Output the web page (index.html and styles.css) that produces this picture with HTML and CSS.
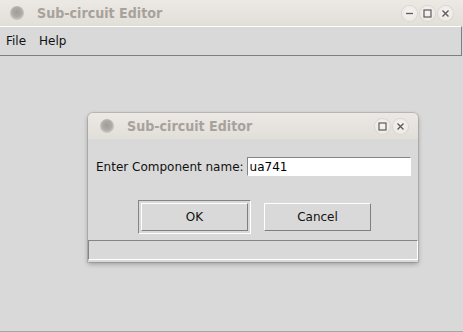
FILE: index.html
```html
<!DOCTYPE html>
<html lang="en">
<head>
    <meta charset="UTF-8">
    <title>Sub-circuit Editor</title>
    <link rel="stylesheet" href="styles.css">
</head>
<body>
    <div class="window">
        <div class="titlebar">
            <span class="orb"></span>
            <span class="title">Sub-circuit Editor</span>
            <div class="controls">
                <span class="ctl"><svg width="15" height="15" viewBox="0 0 15 15"><path d="M4 7.5h7" stroke="#5c5c5c" stroke-width="1.3"/></svg></span>
                <span class="ctl"><svg width="15" height="15" viewBox="0 0 15 15"><rect x="4" y="4" width="7" height="7" fill="none" stroke="#5c5c5c" stroke-width="1.2"/></svg></span>
                <span class="ctl"><svg width="15" height="15" viewBox="0 0 15 15"><path d="M4.5 4.5l6 6M10.5 4.5l-6 6" stroke="#5c5c5c" stroke-width="1.4"/></svg></span>
            </div>
        </div>
        <div class="menubar">
            <span class="menu-item">File</span>
            <span class="menu-item">Help</span>
        </div>
        <div class="workspace"></div>
    </div>

    <div class="dialog">
        <div class="titlebar">
            <span class="orb"></span>
            <span class="title">Sub-circuit Editor</span>
            <div class="controls">
                <span class="ctl"><svg width="15" height="15" viewBox="0 0 15 15"><rect x="4" y="4" width="7" height="7" fill="none" stroke="#5c5c5c" stroke-width="1.2"/></svg></span>
                <span class="ctl"><svg width="15" height="15" viewBox="0 0 15 15"><path d="M4.5 4.5l6 6M10.5 4.5l-6 6" stroke="#5c5c5c" stroke-width="1.4"/></svg></span>
            </div>
        </div>
        <div class="dialog-body">
            <div class="field-row">
                <label for="comp">Enter Component name:</label>
                <input type="text" id="comp" value="ua741">
            </div>
            <div class="button-row">
                <div class="default-ring"><button class="tk-btn">OK</button></div>
                <button class="tk-btn">Cancel</button>
            </div>
        </div>
        <div class="statusbar"></div>
    </div>
</body>
</html>
```

FILE: styles.css
```css
html, body { margin: 0; padding: 0; height: 100%; }
body { background: #d9d9d9; font-family: "DejaVu Sans", sans-serif; font-size: 12px; color: #111; overflow: hidden; }

.window { display: flex; flex-direction: column; height: 100%; }
.titlebar { display: flex; align-items: center; height: 26px; padding: 0 10px; background: linear-gradient(#ece9e5, #e2ded8); flex-shrink: 0; }
.orb { width: 14px; height: 14px; border-radius: 50%; margin-right: 13px; background: radial-gradient(circle at 50% 45%, #9f9b96 0, #aeaaa5 45%, #c9c5c0 70%, #dcd8d3 100%); }
.title { font-family: "DejaVu Sans", sans-serif; font-weight: bold; font-size: 12.7px; color: #a7a29c; transform: scaleY(1.08); }
.controls { margin-left: auto; display: flex; gap: 3px; }
.ctl { width: 15px; height: 15px; border-radius: 50%; background: radial-gradient(circle at 50% 40%, #f5f3f0, #e9e6e2); box-shadow: 0 0 0 1px #dbd6cf; display: flex; }

.menubar { display: flex; align-items: center; height: 28px; margin-right: 1px; border-top: 1px solid #fff; border-bottom: 1px solid #7f7f7f; border-right: 1px solid #7f7f7f; padding-left: 6px; gap: 13px; flex-shrink: 0; }
.workspace { flex: 1; border-bottom: 1px solid #aaa59f; }

.dialog { position: absolute; left: 88px; top: 113px; width: 330px; height: 149px; background: #d9d9d9; border-radius: 5px 5px 0 0; box-shadow: 0 0 0 1px rgba(90, 80, 70, 0.18), 0 2px 5px rgba(0, 0, 0, 0.3); display: flex; flex-direction: column; overflow: hidden; }
.dialog .titlebar { padding-left: 12px; }
.dialog-body { height: 101px; }
.field-row { display: flex; align-items: center; padding: 18px 0 0 8px; gap: 3px; }
.field-row input { width: 164px; height: 19px; box-sizing: border-box; margin: 0; padding: 0 2px; font: 12px "DejaVu Sans", sans-serif; color: #000; background: #fff; border: 1px solid; border-color: #858585 #fff #fff #858585; outline: none; }
.button-row { display: flex; align-items: center; padding: 24px 0 0 50px; gap: 13px; }
.default-ring { padding: 2px; border: 1px solid; border-color: #858585 #fff #fff #858585; }
.tk-btn { width: 107px; height: 28px; margin: 0; padding: 0; font: 12px "DejaVu Sans", sans-serif; color: #111; background: #d9d9d9; border: 1px solid; border-color: #fff #7f7f7f #7f7f7f #fff; }
.statusbar { height: 20px; box-sizing: border-box; border: 1px solid; border-color: #858585 #fff #fff #858585; }
```
